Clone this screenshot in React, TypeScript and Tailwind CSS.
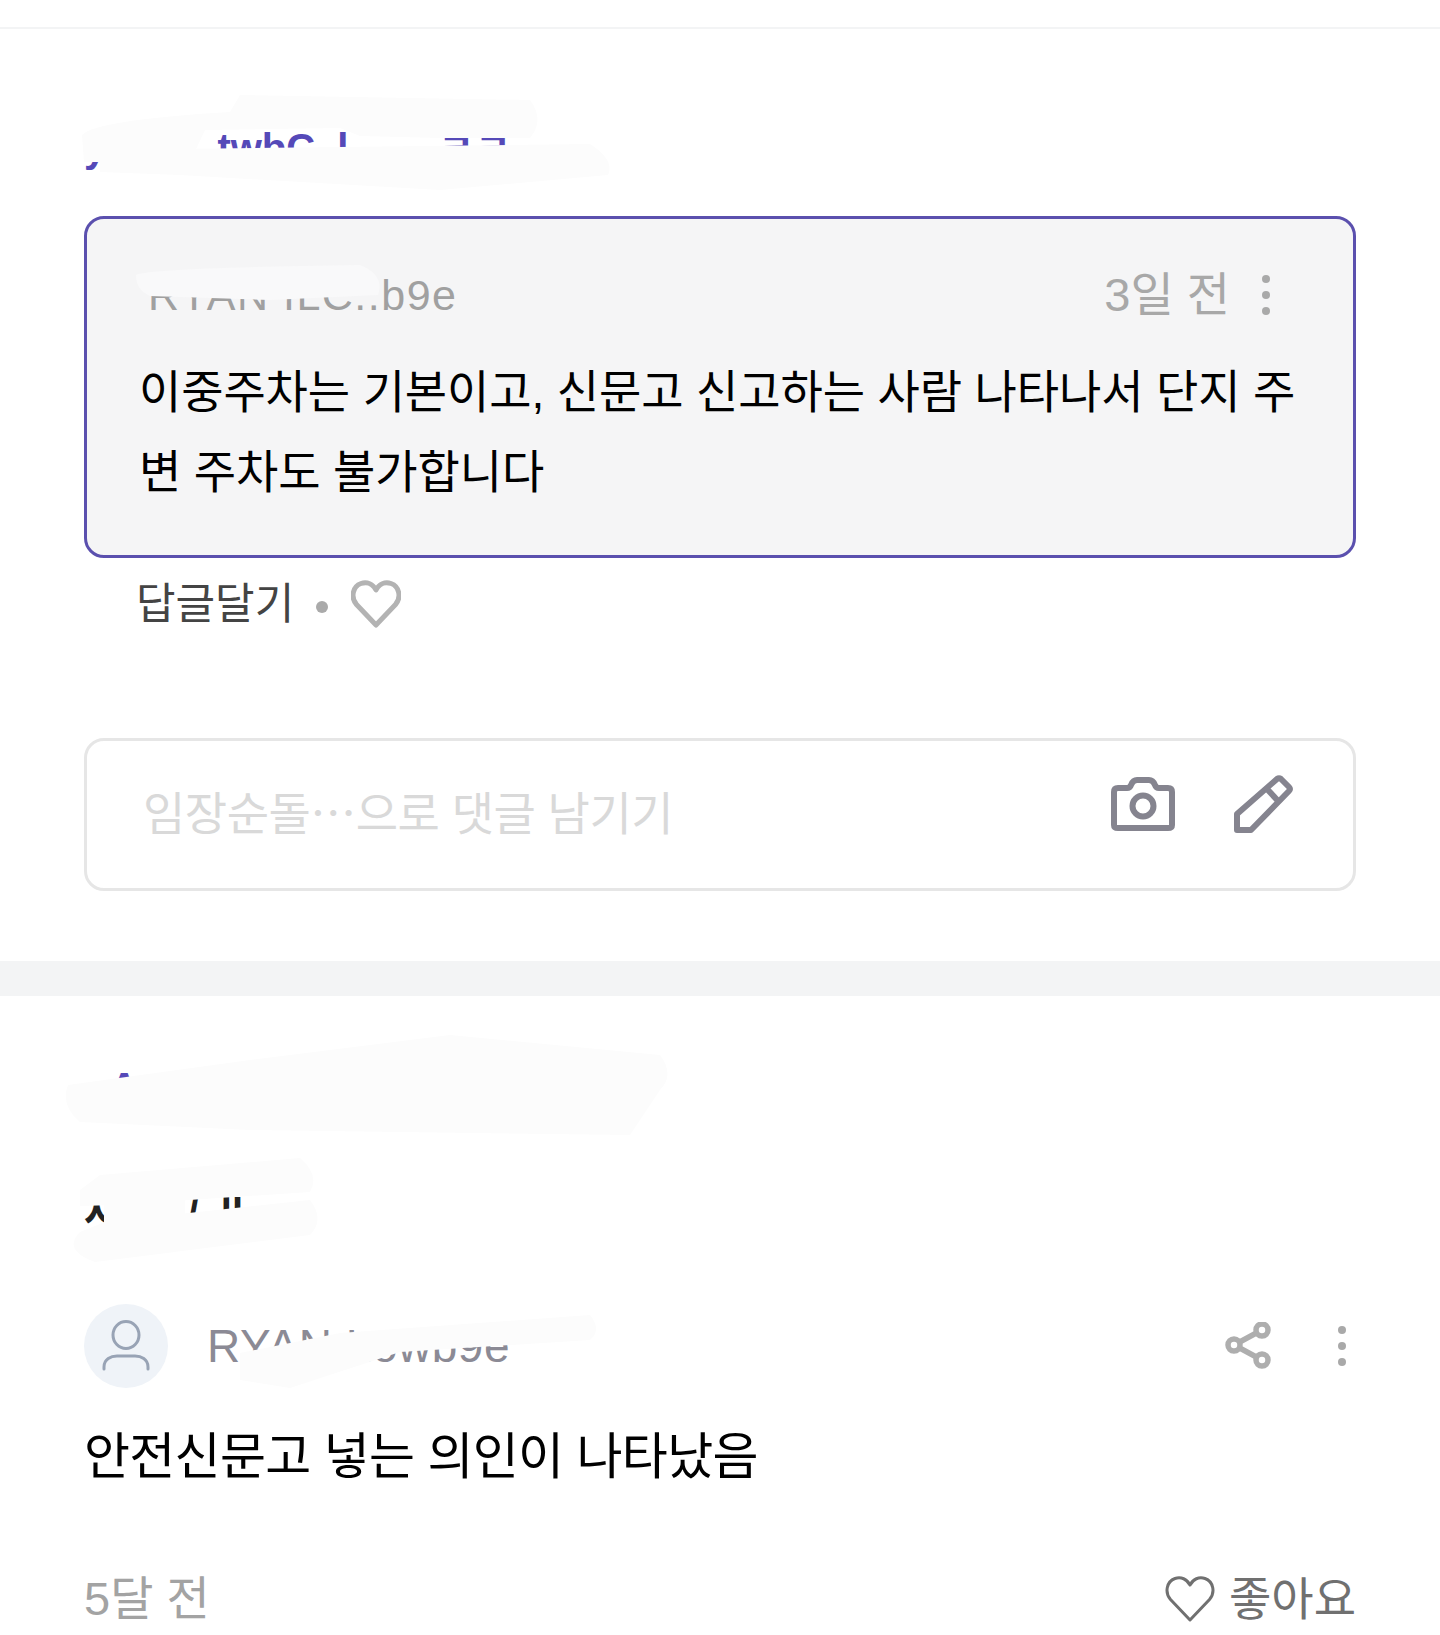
const font = "font-['Liberation_Sans','Noto_Sans_CJK_KR',sans-serif]";

function Dots({ className }: { className?: string }) {
  return (
    <svg width="8" height="40" viewBox="0 0 8 40" className={className} fill="#a9a9a9">
      <circle cx="4" cy="4" r="4" />
      <circle cx="4" cy="20" r="4" />
      <circle cx="4" cy="36" r="4" />
    </svg>
  );
}

function Heart({ size, color, stroke }: { size: number; color: string; stroke: number }) {
  return (
    <svg width={size} height={size} viewBox="0 0 50 48" fill="none" stroke={color} strokeWidth={stroke} strokeLinejoin="round">
      <path d="M25 45 L5.5 24.5 C-0.5 17.5 1.5 6.5 10 3.5 C16 1.5 22 4 25 10 C28 4 34 1.5 40 3.5 C48.5 6.5 50.5 17.5 44.5 24.5 Z" />
    </svg>
  );
}

function CameraIcon() {
  return (
    <svg width="64" height="56" viewBox="0 0 64 56" fill="none" stroke="#85848f" strokeWidth="6" strokeLinejoin="round">
      <path d="M3 16 Q3 12 7 12 H16 Q19 12 20 9 Q22 4 26 4 H38 Q42 4 44 9 Q45 12 48 12 H57 Q61 12 61 16 V49 Q61 52 57 52 H7 Q3 52 3 49 Z" />
      <circle cx="32" cy="30" r="10.5" />
    </svg>
  );
}

function PencilIcon() {
  return (
    <svg width="60" height="58" viewBox="0 0 60 58" fill="none" stroke="#85848f" strokeWidth="6" strokeLinejoin="round">
      <path d="M4 55 V39 L44 4 Q46 2.500 48 4 L56 12 Q58 14 56 16 L18 55 Z" />
      <path d="M34 14 L47 28" />
    </svg>
  );
}

function ShareIcon() {
  return (
    <svg width="48" height="48" viewBox="0 0 48 48" fill="none" stroke="#aeaeae" strokeWidth="5.5">
      <path d="M12 22 L36 9 M12 24 L36 37" />
      <circle cx="10" cy="23" r="6" fill="#fff" />
      <circle cx="38" cy="8" r="6" fill="#fff" />
      <circle cx="38" cy="38" r="6" fill="#fff" />
    </svg>
  );
}

function UserIcon() {
  return (
    <svg width="48" height="52" viewBox="0 0 48 52" fill="none" stroke="#98a3b5" strokeWidth="3" strokeLinecap="round">
      <ellipse cx="24" cy="15" rx="13" ry="13.500" />
      <path d="M2 49 V47 C2 39 9 36 15 36 H33 C39 36 46 39 46 47 V49" />
    </svg>
  );
}

// whitish scribbles that hide the names in the screenshot
function Scribbles() {
  return (
    <svg className="absolute inset-0 pointer-events-none" width="1440" height="1635" viewBox="0 0 1440 1635" fill="#fcfcfc">
      <path d="M82 135 Q96 120 230 112 L240 95 L530 100 Q545 120 530 138 L440 138 L360 136 L340 128 L205 130 L190 162 L84 162 Z" />
      <path d="M100 172 L100 150 L590 144 Q615 160 608 175 L440 190 L180 175 Z" />
      <path d="M136 275 Q150 268 360 265 Q385 275 378 295 L270 300 L150 296 Q136 290 136 275 Z" fill="#f9f9fa" />
      <path d="M68 1085 L250 1060 L450 1035 L660 1055 Q675 1075 660 1090 L630 1135 L250 1130 L80 1122 Q60 1105 68 1085 Z" />
      <path d="M80 1190 L100 1175 L300 1158 Q320 1175 310 1192 L115 1205 L80 1206 Z" />
      <path d="M80 1232 L105 1222 L310 1200 Q325 1220 310 1235 L95 1262 Q62 1250 80 1232 Z" />
      <path d="M104 1200 L185 1195 L185 1225 L104 1225 Z" />
      <path d="M240 1353 L340 1333 L590 1315 Q602 1330 590 1340 L400 1352 L290 1388 L240 1380 Z" />
    </svg>
  );
}

export default function App() {
  return (
    <div className={`relative w-[1440px] h-[1635px] overflow-hidden bg-white ${font}`}>
      <div className="h-[29px] border-b-2 border-[#f3f4f5]" />

      {/* Post title */}
      <div className="h-[187px] px-[84px] pt-[95px]">
        <p className="text-[40px] leading-[48px] font-bold text-[#5549b8] whitespace-pre">{"y          twbC  l        ㅋㅋ"}</p>
      </div>

      {/* Selected comment */}
      <div className="mx-[84px] h-[342px] rounded-[20px] border-[3px] border-[#5b50ae] bg-[#f5f5f6] pl-[52px] pr-[50px]">
        <div className="flex h-[133px] items-center justify-between pt-[19px]">
          <span className="ml-[9px] text-[43px] tracking-[1.5px] text-[#a0a0a0]">RYAN ILC..b9e</span>
          <div className="flex items-center gap-[32px] pr-[33px]">
            <span className="text-[47px] text-[#a8a8a8]">3일 전</span>
            <Dots />
          </div>
        </div>
        <p className="text-[46px] leading-[80px] text-black tracking-[-0.12px]">
          이중주차는 기본이고, 신문고 신고하는 사람 나타나서 단지 주변 주차도 불가합니다
        </p>
      </div>

      {/* Reply row */}
      <div className="flex h-[180px] items-start gap-[22px] pl-[136px] pt-[16px]">
        <span className="text-[43px] leading-[60px] text-[#444444]">답글달기</span>
        <span className="mt-[27px] size-[12px] rounded-full bg-[#aaaaaa]" />
        <div className="mt-[5px] ml-[1px]"><Heart size={50} color="#b3b3b3" stroke={5} /></div>
      </div>

      {/* Comment input */}
      <div className="mx-[84px] flex h-[153px] items-center justify-between rounded-[20px] border-[3px] border-[#e6e6e6] pl-[56px] pr-[60px]">
        <span className="text-[46px] text-[#d9d9d9] tracking-[-0.5px]">임장순돌⋯으로 댓글 남기기</span>
        <div className="flex items-center gap-[58px] pb-[21px]">
          <CameraIcon />
          <PencilIcon />
        </div>
      </div>

      <div className="mt-[70px] h-[35px] bg-[#f3f4f5]" />

      {/* Next post */}
      <div className="px-[84px] pt-[67px]">
        <p className="ml-[5px] text-[40px] leading-[48px] font-bold text-[#5549b8] whitespace-pre">{"  A"}</p>
        <p className="mt-[78px] text-[40px] leading-[48px] font-bold text-[#222222] whitespace-pre">{"사      /  ll"}</p>

        <div className="mt-[67px] flex items-center justify-between">
          <div className="flex items-center gap-[39px]">
            <div className="flex size-[84px] items-center justify-center rounded-full bg-[#eff3f8]"><UserIcon /></div>
            <span className="text-[46px] tracking-[0.5px] text-[#8b8a95]">RYAN Lowb9e</span>
          </div>
          <div className="flex items-center gap-[66px] pr-[10px]">
            <ShareIcon />
            <Dots />
          </div>
        </div>

        <p className="mt-[38px] text-[50px] leading-[62px] text-black tracking-[-0.7px]">안전신문고 넣는 의인이 나타났음</p>

        <div className="mt-[76px] flex items-center justify-between">
          <span className="text-[47px] text-[#a3a3a3]">5달 전</span>
          <div className="flex items-center gap-[14px]">
            <Heart size={50} color="#707070" stroke={3} />
            <span className="text-[46px] text-[#707070]">좋아요</span>
          </div>
        </div>
      </div>

      <Scribbles />
    </div>
  );
}
